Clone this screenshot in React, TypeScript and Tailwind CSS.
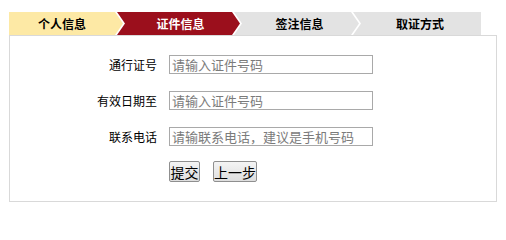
import React from 'react';

const TABS = [
  { label: '个人信息', w: 'w-[114px]', cls: 'bg-[#fde9a5] text-black', first: true, last: false, pad: 'pl-0 pr-[8px]' },
  { label: '证件信息', w: 'w-[123px]', cls: 'bg-[#9b0f1c] text-white', first: false, last: false, pad: 'pl-[10px] pr-[6px]' },
  { label: '签注信息', w: 'w-[125px]', cls: 'bg-[#e3e3e3] text-black', first: false, last: false, pad: 'pl-[12px] pr-[6px]' },
  { label: '取证方式', w: 'w-[128px]', cls: 'bg-[#e3e3e3] text-black', first: false, last: true, pad: 'pl-[8px] pr-[2px]' },
];

const ROWS = [
  { label: '通行证号', placeholder: '请输入证件号码' },
  { label: '有效日期至', placeholder: '请输入证件号码' },
  { label: '联系电话', placeholder: '请输联系电话，建议是手机号码' },
];

function clipFor(first: boolean, last: boolean) {
  if (first) return '[clip-path:polygon(0_0,calc(100%-8px)_0,100%_50%,calc(100%-8px)_100%,0_100%)]';
  if (last) return '[clip-path:polygon(0_0,100%_0,100%_100%,0_100%,8px_50%)]';
  return '[clip-path:polygon(0_0,calc(100%-8px)_0,100%_50%,calc(100%-8px)_100%,0_100%,8px_50%)]';
}

export default function App() {
  return (
    <div className="min-h-[223px] bg-white pl-[9px] pt-[12px] font-['Noto_Sans_CJK_SC','Microsoft_YaHei',sans-serif]">
      {/* step bar */}
      <div className="flex h-[23px] w-[472px]">
        {TABS.map((t, i) => (
          <div
            key={t.label}
            className={`flex h-full shrink-0 items-center justify-center text-[12px] font-bold leading-none ${t.w} ${t.cls} ${t.pad} ${
              i > 0 ? '-ml-[6px]' : ''
            } ${clipFor(t.first, t.last)}`}
          >
            {t.label}
          </div>
        ))}
      </div>

      {/* form panel */}
      <div className="w-[488px] border border-[#d9d9d9] pb-[19px] pt-[19px]">
        <div className="flex flex-col gap-[17px]">
          {ROWS.map((r) => (
            <div key={r.label} className="flex items-center">
              <label className="w-[147px] shrink-0 text-right text-[12px] leading-none text-black">{r.label}</label>
              <input
                type="text"
                placeholder={r.placeholder}
                className="ml-[12px] h-[19px] w-[204px] border border-[#a9a9a9] bg-white px-[2px] text-[13px] leading-none text-black outline-none placeholder:text-[#7b7b7b]"
              />
            </div>
          ))}
        </div>

        <div className="mt-[15px] flex gap-[13px] pl-[159px]">
          <button className="h-[21px] w-[31px] rounded-[2px] border border-[#8f8f8f] bg-gradient-to-b from-[#f4f4f4] to-[#dedede] text-[14px] leading-none text-black">
            提交
          </button>
          <button className="h-[21px] w-[44px] rounded-[2px] border border-[#8f8f8f] bg-gradient-to-b from-[#f4f4f4] to-[#dedede] text-[14px] leading-none text-black">
            上一步
          </button>
        </div>
      </div>
    </div>
  );
}
